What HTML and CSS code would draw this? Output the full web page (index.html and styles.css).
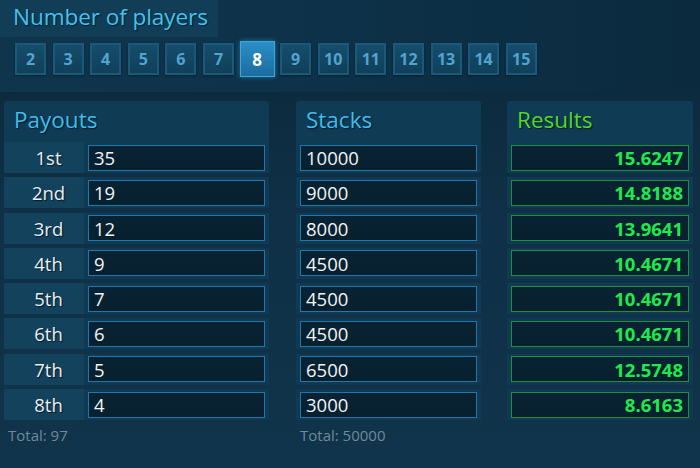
FILE: index.html
```html
<!DOCTYPE html>
<html>
<head>
<meta charset="utf-8">
<link rel="stylesheet" href="styles.css">
</head>
<body>
<div class="page">
  <div class="top">
    <div class="title-panel"><h1 class="title">Number of players</h1></div>
    <div class="players">
      <span class="pbtn">2</span>
      <span class="pbtn">3</span>
      <span class="pbtn">4</span>
      <span class="pbtn">5</span>
      <span class="pbtn">6</span>
      <span class="pbtn">7</span>
      <span class="pbtn active">8</span>
      <span class="pbtn">9</span>
      <span class="pbtn">10</span>
      <span class="pbtn">11</span>
      <span class="pbtn">12</span>
      <span class="pbtn">13</span>
      <span class="pbtn">14</span>
      <span class="pbtn">15</span>
    </div>
  </div>

  <div class="sections">
    <div class="col col-payouts">
      <div class="panel-head"><h2 class="head blue">Payouts</h2></div>
      <div class="rows">
        <div class="row"><span class="place">1st</span><span class="field">35</span></div>
        <div class="row"><span class="place">2nd</span><span class="field">19</span></div>
        <div class="row"><span class="place">3rd</span><span class="field">12</span></div>
        <div class="row"><span class="place">4th</span><span class="field">9</span></div>
        <div class="row"><span class="place">5th</span><span class="field">7</span></div>
        <div class="row"><span class="place">6th</span><span class="field">6</span></div>
        <div class="row"><span class="place">7th</span><span class="field">5</span></div>
        <div class="row"><span class="place">8th</span><span class="field">4</span></div>
      </div>
      <div class="total">Total: 97</div>
    </div>

    <div class="col col-stacks">
      <div class="panel-head"><h2 class="head blue">Stacks</h2></div>
      <div class="rows">
        <div class="row"><span class="field">10000</span></div>
        <div class="row"><span class="field">9000</span></div>
        <div class="row"><span class="field">8000</span></div>
        <div class="row"><span class="field">4500</span></div>
        <div class="row"><span class="field">4500</span></div>
        <div class="row"><span class="field">4500</span></div>
        <div class="row"><span class="field">6500</span></div>
        <div class="row"><span class="field">3000</span></div>
      </div>
      <div class="total">Total: 50000</div>
    </div>

    <div class="col col-results">
      <div class="panel-head"><h2 class="head green">Results</h2></div>
      <div class="rows">
        <div class="row"><span class="result">15.6247</span></div>
        <div class="row"><span class="result">14.8188</span></div>
        <div class="row"><span class="result">13.9641</span></div>
        <div class="row"><span class="result">10.4671</span></div>
        <div class="row"><span class="result">10.4671</span></div>
        <div class="row"><span class="result">10.4671</span></div>
        <div class="row"><span class="result">12.5748</span></div>
        <div class="row"><span class="result">8.6163</span></div>
      </div>
    </div>
  </div>
</div>
</body>
</html>
```

FILE: styles.css
```css
html, body {
  margin: 0;
  padding: 0;
}
body {
  width: 700px;
  height: 468px;
  overflow: hidden;
  font-family: "Open Sans", "Noto Sans", sans-serif;
  background: linear-gradient(180deg, #0b2739 0%, #0f3046 45%, #10344b 100%);
}
.page {
  width: 700px;
  height: 468px;
}
.top {
  height: 92px;
  background: linear-gradient(90deg, #0f354d 0%, #0d3148 50%, #0b2a3e 100%);
}
.title-panel {
  width: 218px;
  height: 37px;
  background: #113d57;
  box-sizing: border-box;
  padding: 2px 0 0 13px;
}
.title {
  margin: 0;
  font-size: 22.6px;
  font-weight: 400;
  line-height: 30px;
  color: #47c1eb;
  text-shadow: 1px 1px 1px #062033;
  letter-spacing: -0.1px;
}
.players {
  display: flex;
  align-items: center;
  gap: 6.6px;
  padding-left: 15px;
  margin-top: 4px;
  height: 36px;
}
.pbtn {
  width: 31px;
  height: 32px;
  box-sizing: border-box;
  display: flex;
  align-items: center;
  justify-content: center;
  background: linear-gradient(180deg, #154d6b 0%, #113f59 100%);
  border: 2px solid #19597a;
  color: #52a3d0;
  font-weight: 700;
  font-size: 16px;
  box-shadow: 0 1px 2px rgba(0,0,0,0.35);
}
.pbtn.active {
  width: 35px;
  height: 36px;
  margin: 0 -1px;
  background: linear-gradient(180deg, #2a8ec8 0%, #1b6d9f 100%);
  border: 1px solid #3fa6dc;
  color: #ffffff;
  font-size: 17px;
  box-shadow: 0 0 5px rgba(60,170,230,0.55);
}
.sections {
  display: flex;
  padding: 9px 0 0 4px;
  gap: 27px;
}
.col-payouts { width: 265px; }
.col-stacks { width: 185px; }
.col-results { width: 186px; margin-left: -1px; }
.panel-head {
  height: 41px;
  background: #103b55;
  border-radius: 3px 3px 0 0;
  box-sizing: border-box;
  padding: 3px 0 0 10px;
}
.head {
  margin: 0;
  font-size: 22.5px;
  font-weight: 400;
  line-height: 32px;
  text-shadow: 1px 1px 1px #051b2a;
}
.blue { color: #40bdea; }
.green { color: #52d82b; }
.rows {
  display: flex;
  flex-direction: column;
  gap: 4.3px;
}
.row {
  height: 31px;
  display: flex;
  align-items: center;
  background: #103a53;
  box-sizing: border-box;
  padding: 0 4px;
  gap: 4px;
}
.col-payouts .row { padding: 0 4px 0 0; }
.place {
  width: 80px;
  height: 31px;
  box-sizing: border-box;
  padding-left: 9px;
  display: flex;
  align-items: center;
  justify-content: center;
  background: #13425d;
  color: #e8eef2;
  font-size: 18.5px;
  text-shadow: 1px 1px 1px #061a27;
}
.field, .result {
  flex: 1;
  height: 26px;
  box-sizing: border-box;
  display: flex;
  align-items: center;
  background: linear-gradient(180deg, #0a2334 0%, #07202e 100%);
  font-size: 18.5px;
}
.field {
  border: 1px solid #1f78ad;
  color: #f0f4f7;
  padding-left: 5px;
}
.result {
  border: 1px solid #229037;
  color: #1fea4c;
  font-weight: 700;
  justify-content: flex-end;
  padding-right: 5px;
}
.total {
  margin-top: 5px;
  padding-left: 4px;
  font-size: 15px;
  color: #6f8a99;
}
```
